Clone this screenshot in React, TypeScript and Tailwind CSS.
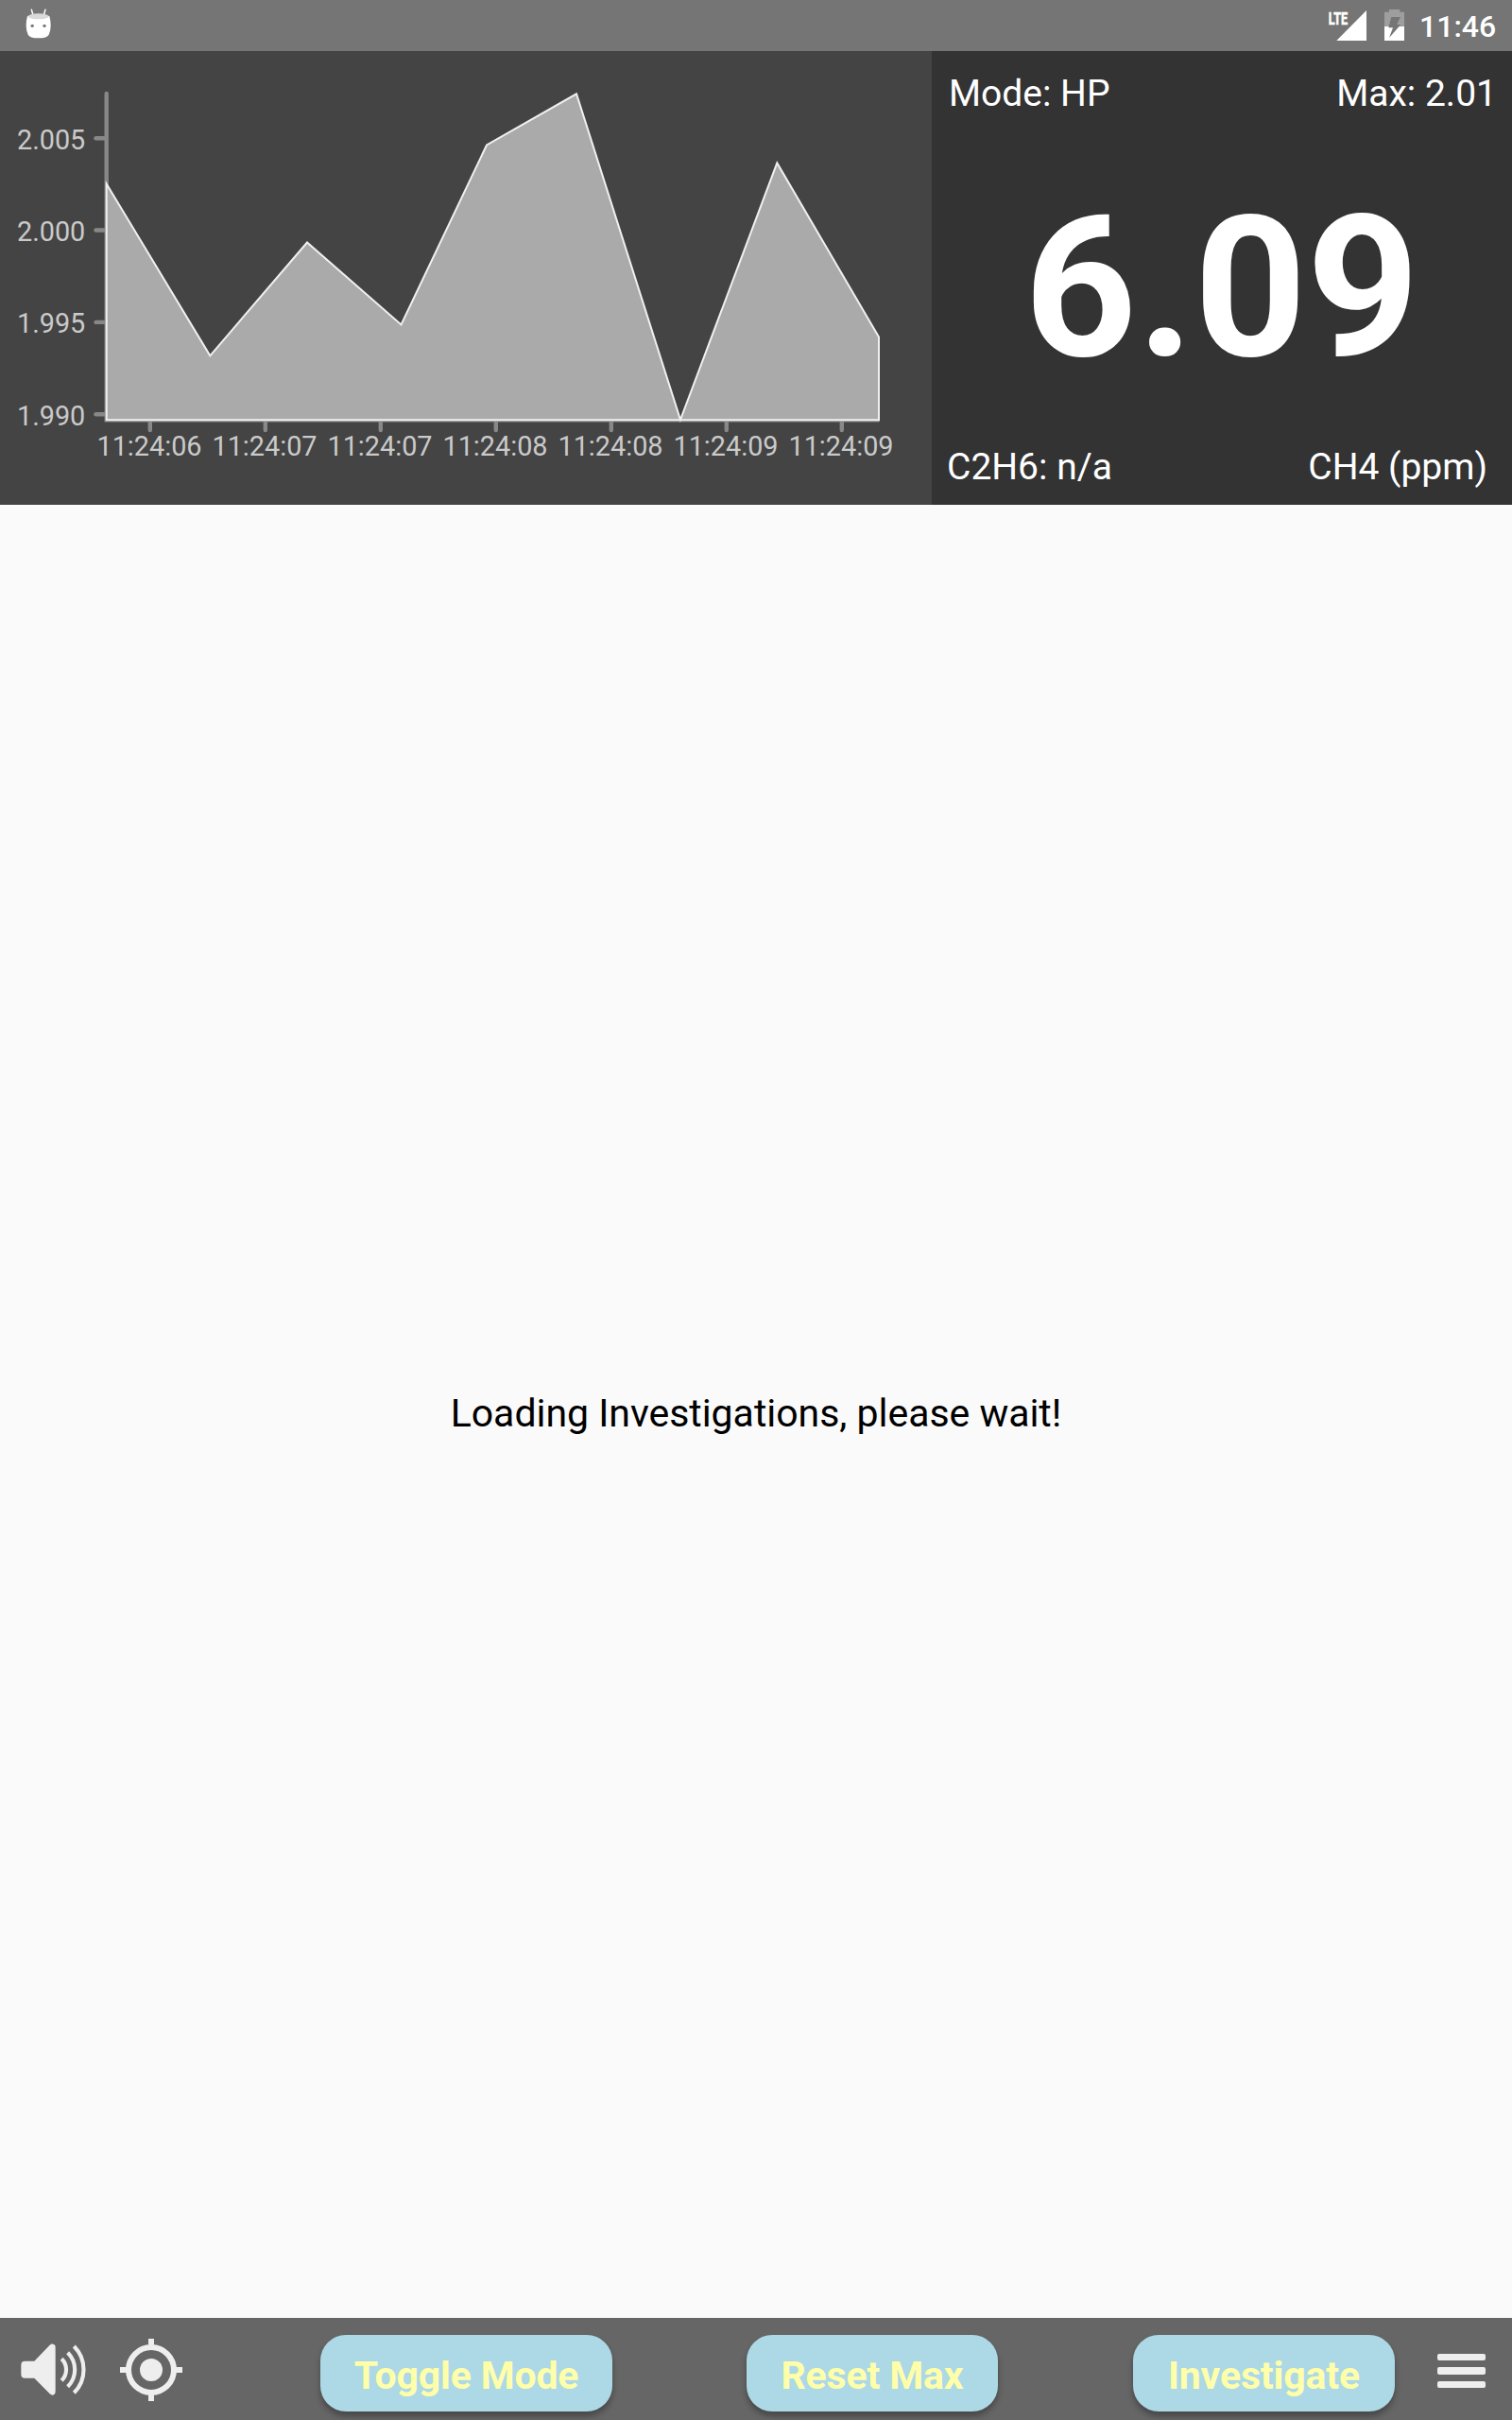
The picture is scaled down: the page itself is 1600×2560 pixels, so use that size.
const points = "112.7,194.5 222.3,376.3 325,256.5 424.5,343.5 515,153.5 610,99.3 720,444 822.3,172.4 930,356.5 930,444.3 112.7,444.3";

const yTicks = [
  { y: 146.2, label: "2.005" },
  { y: 243.5, label: "2.000" },
  { y: 340.9, label: "1.995" },
  { y: 438.2, label: "1.990" },
];

const xTicks = [
  { x: 158.8, label: "11:24:06" },
  { x: 280.8, label: "11:24:07" },
  { x: 402.8, label: "11:24:07" },
  { x: 524.8, label: "11:24:08" },
  { x: 646.8, label: "11:24:08" },
  { x: 768.8, label: "11:24:09" },
  { x: 890.8, label: "11:24:09" },
];

function DroidIcon() {
  return (
    <svg className="h-8 w-7" viewBox="82 26 84 96">
      <g stroke="#fff" strokeWidth="4.5" strokeLinecap="round">
        <path d="M101 29.500L106 47" />
        <path d="M145 29.500L140 47" />
      </g>
      <path d="M88 50Q123 44 158 50Q162 64 162 80Q162 98 156 109Q151 120 123 120Q95 120 90 109Q84 98 84 80Q84 64 88 50Z" fill="#fff" />
      <ellipse cx="123" cy="51" rx="33" ry="9" fill="#d9d9d9" />
      <circle cx="103.500" cy="81" r="5" fill="#757575" />
      <circle cx="142" cy="81" r="5" fill="#757575" />
    </svg>
  );
}

function SignalIcon() {
  return (
    <svg className="h-10 w-10" viewBox="0 -8 40 40">
      <path d="M40 0V32H8.300Z" fill="#fff" />
      <text x="-0.500" y="14.600" fontFamily="Roboto" fontWeight="700" fontSize="19" textLength="31" lengthAdjust="spacingAndGlyphs" transform="scale(0.660 1)" fill="#fff" stroke="#fff" strokeWidth="0.600">
        LTE
      </text>
    </svg>
  );
}

function BatteryIcon() {
  return (
    <svg className="h-[33px] w-[21px]" viewBox="255 30 63 99">
      <path d="M270 30H304V38H318V84H255V38H270Z" fill="#9e9e9e" />
      <path d="M255 84H318V129H255Z" fill="#fff" />
      <path d="M277 54H306L294 78H307L270 120L282 88H268Z" fill="#757575" />
    </svg>
  );
}

function Chart() {
  return (
    <svg className="h-[480px] w-[986px]" viewBox="0 54 986 480" fontFamily="Roboto" fontSize="28.800" fill="#cacaca">
      <g stroke="#888" strokeWidth="4.400" strokeLinecap="round">
        <path d="M112.700 99V444.300H929" fill="none" />
        {yTicks.map((t) => (
          <path key={t.label} d={`M101.500 ${t.y}H112`} />
        ))}
        {xTicks.map((t) => (
          <path key={t.x} d={`M${t.x} 445V455`} />
        ))}
      </g>
      <polygon points={points} fill="#aaa" stroke="#f0f0f0" strokeWidth="2" />
      {yTicks.map((t) => (
        <text key={t.label} x="90.300" y={t.y + 11.5} textAnchor="end">
          {t.label}
        </text>
      ))}
      {xTicks.map((t) => (
        <text key={t.x} x={t.x - 0.8} y="482" textAnchor="middle">
          {t.label}
        </text>
      ))}
    </svg>
  );
}

function SpeakerIcon() {
  return (
    <svg className="h-[55px] w-[69px]" viewBox="66 118 207 165">
      <path d="M79 174H109L158 123Q165 117 171 121Q176 123 176 130V271Q176 278 171 281Q165 284 158 278L109 228H79Q67 228 67 216V186Q67 174 79 174Z" fill="#eee" />
      <g fill="none" stroke="#eee" strokeWidth="12.500">
        <path d="M195.500 167A48 48 0 0 1 195.500 236" />
        <path d="M215 147A76 76 0 0 1 215 255" />
        <path d="M235 127A105 105 0 0 1 235 275" />
      </g>
    </svg>
  );
}

function LocateIcon() {
  return (
    <svg className="h-[66px] w-[66px]" viewBox="381 101.500 198 198">
      <circle cx="480" cy="200.500" r="36" fill="#eee" />
      <circle cx="480" cy="200.500" r="72" fill="none" stroke="#eee" strokeWidth="18" />
      <path d="M480 101.500V122M480 279V299.500M381 200.500H402M558 200.500H579" stroke="#eee" strokeWidth="18" />
    </svg>
  );
}

function MenuIcon() {
  return (
    <div className="flex h-[36px] w-[51px] flex-col justify-between">
      <div className="h-[7.300px] rounded-[2px] bg-[#eee]" />
      <div className="h-[7.300px] rounded-[2px] bg-[#eee]" />
      <div className="h-[7.300px] rounded-[2px] bg-[#eee]" />
    </div>
  );
}

const button =
  "h-[81px] shrink-0 rounded-[27px] bg-[#add8e6] pt-[5px] text-center text-[41px] leading-[76px] font-bold tracking-[-0.150px] whitespace-nowrap text-[#ffffaa] shadow-[0_5px_6px_rgba(0,0,0,0.300)]";

export default function App() {
  return (
    <div className="flex h-[2560px] w-[1600px] flex-col overflow-hidden bg-[#fafafa] font-['Roboto',sans-serif]">
      <header className="flex h-[54px] shrink-0 items-start bg-[#757575] text-white">
        <div className="mt-[9px] ml-[27px]">
          <DroidIcon />
        </div>
        <div className="mt-[3px] ml-auto">
          <SignalIcon />
        </div>
        <div className="mt-[10px] ml-[19px]">
          <BatteryIcon />
        </div>
        <div className="mt-[8px] mr-[18px] ml-[16px] w-[80px] text-right text-[32px] leading-[40px] font-medium">11:46</div>
      </header>

      <section className="flex h-[480px] shrink-0">
        <div className="w-[986px] bg-[#444]">
          <Chart />
        </div>
        <div className="flex flex-1 flex-col justify-between bg-[#333] text-[39px] leading-[48px] text-white">
          <div className="flex justify-between pt-[21px] pr-[16px] pl-[18px]">
            <span>Mode: HP</span>
            <span>Max: 2.01</span>
          </div>
          <div className="pt-[16px] text-center text-[208px] leading-[240px] font-bold">6.09</div>
          <div className="flex justify-between pr-[26px] pb-[16px] pl-4">
            <span>C2H6: n/a</span>
            <span>CH4 (ppm)</span>
          </div>
        </div>
      </section>

      <main className="flex flex-1 items-center justify-center pt-1 text-[41px] leading-[50px] tracking-[-0.030px] text-black">Loading Investigations, please wait!</main>

      <footer className="flex h-[108px] shrink-0 items-start bg-[#666]">
        <div className="mt-[27px] ml-[22px]">
          <SpeakerIcon />
        </div>
        <div className="mt-[22px] ml-[36px]">
          <LocateIcon />
        </div>
        <button className={`${button} mt-[18px] ml-[146px] w-[309px]`}>Toggle Mode</button>
        <button className={`${button} mt-[18px] ml-[142px] w-[266px]`}>Reset Max</button>
        <button className={`${button} mt-[18px] ml-[143px] w-[277px]`}>Investigate</button>
        <div className="mt-[38px] ml-[44.500px]">
          <MenuIcon />
        </div>
      </footer>
    </div>
  );
}
